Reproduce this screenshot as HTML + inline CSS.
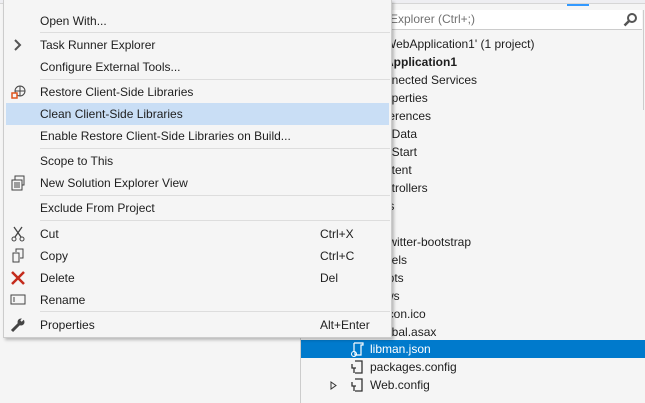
<!DOCTYPE html>
<html><head><style>
*{margin:0;padding:0;box-sizing:border-box}
body{width:645px;height:403px;overflow:hidden;background:#f5f5f5;font-family:"Liberation Sans",sans-serif;font-size:12px;color:#1e1e1e;position:relative}
.abs{position:absolute}
.top{left:0;top:0;width:645px;height:4px;background:#eeeef2;border-bottom:1px solid #d6d6d6}
.search{left:300px;top:10px;width:342px;height:20px;background:#fff;border-bottom:1px solid #ccc}
.tree div{position:absolute;left:0;height:18px;line-height:18px;white-space:nowrap}
.menu{left:3px;top:0;width:389px;height:338px;background:#f5f5f5;border:1px solid #ccc;border-top:none;box-shadow:2px 2px 3px rgba(0,0,0,.25)}
.it{position:absolute;left:0;width:385px;height:22px;line-height:22px}
.it .t{position:absolute;left:36px}
.it .k{position:absolute;left:316px}
.sep{position:absolute;left:36px;width:350px;height:1px;background:#ddd}
.ic{position:absolute;left:6px;top:3px;width:16px;height:16px}
</style></head><body>
<div class="abs top"></div>
<div class="abs" style="left:567px;top:4px;width:22px;height:2px;background:#3399ff"></div>
<div class="abs search"><span class="abs" style="left:90px;top:2px;color:#717171">Explorer (Ctrl+;)</span>
<svg class="abs" style="left:323px;top:3px" width="14" height="14"><circle cx="9" cy="5" r="4" fill="none" stroke="#555" stroke-width="2"/><line x1="6" y1="8" x2="1.5" y2="12.5" stroke="#555" stroke-width="2.5"/></svg></div>
<div class="abs" style="left:643px;top:10px;width:1px;height:100px;background:#ccc"></div>
<div class="abs" style="left:300px;top:338px;width:1px;height:65px;background:#ccc"></div>
<div class="abs tree" style="left:300px;top:0;width:345px;height:403px">
<div style="top:35px;left:85px">WebApplication1' (1 project)</div>
<div style="top:53px;left:85px;font-weight:bold">Application1</div>
<div style="top:71px;left:85px">nnected Services</div>
<div style="top:89px;left:85px">operties</div>
<div style="top:107px;left:85px">ferences</div>
<div style="top:125px;left:85px">_Data</div>
<div style="top:143px;left:85px">_Start</div>
<div style="top:161px;left:85px">ntent</div>
<div style="top:179px;left:85px">ntrollers</div>
<div style="top:197px;left:85px">ts</div>
<div style="top:233px;left:85px">twitter-bootstrap</div>
<div style="top:251px;left:85px">dels</div>
<div style="top:269px;left:85px">ipts</div>
<div style="top:287px;left:85px">ws</div>
<div style="top:305px;left:85px">icon.ico</div>
<div style="top:323px;left:85px">obal.asax</div>
<div style="top:340px;left:1px;width:344px;background:#007acc;color:#fff"><svg class="abs" style="left:48px;top:1px" width="16" height="16"><path d="M5 2h9v2h-2v10H6v-3M5 2v9" fill="none" stroke="#fff" stroke-width="1.2"/><circle cx="5" cy="13" r="2.5" fill="none" stroke="#fff"/></svg><span class="abs" style="left:69px">libman.json</span></div>
<div style="top:358px;left:49px"><svg class="abs" style="left:0;top:1px" width="16" height="16"><path d="M6 2h7v12H6M3 5v4h4M5 9v5" fill="none" stroke="#333" stroke-width="1.3"/></svg><span class="abs" style="left:21px">packages.config</span></div>
<div style="top:376px;left:30px"><svg class="abs" style="left:0;top:5px" width="8" height="9"><path d="M1 1l5 3.5L1 8z" fill="none" stroke="#333"/></svg><svg class="abs" style="left:19px;top:1px" width="16" height="16"><path d="M6 2h7v12H6M3 5v4h4M5 9v5" fill="none" stroke="#333" stroke-width="1.3"/></svg><span class="abs" style="left:40px">Web.config</span></div>
</div>
<div class="abs menu">
<div class="it" style="top:10px"><span class="t">Open With...</span></div>
<div class="sep" style="top:32px"></div>
<div class="it" style="top:34px"><svg class="ic" viewBox="0 0 16 16"><path d="M5 3l5 5-5 5" fill="none" stroke="#555" stroke-width="2"/></svg><span class="t">Task Runner Explorer</span></div>
<div class="it" style="top:56px"><span class="t">Configure External Tools...</span></div>
<div class="sep" style="top:79px"></div>
<div class="it" style="top:81px"><svg class="ic" viewBox="0 0 16 16"><circle cx="10" cy="7" r="5" fill="none" stroke="#444"/><path d="M5 7h10M10 2v10" stroke="#444"/><rect x="2" y="9" width="5" height="5" fill="#f5f5f5" stroke="#e0541c" stroke-width="1.5"/></svg><span class="t">Restore Client-Side Libraries</span></div>
<div class="it" style="top:103px;left:2px;width:383px;background:#c9def5"><span class="t" style="left:34px">Clean Client-Side Libraries</span></div>
<div class="it" style="top:125px"><span class="t">Enable Restore Client-Side Libraries on Build...</span></div>
<div class="sep" style="top:148px"></div>
<div class="it" style="top:150px"><span class="t">Scope to This</span></div>
<div class="it" style="top:172px"><svg class="ic" viewBox="0 0 16 16"><rect x="5" y="1" width="9" height="9" fill="none" stroke="#444"/><rect x="2" y="5" width="10" height="10" fill="#f5f5f5" stroke="#444"/><path d="M4 8h6M4 10h6M4 12h6" stroke="#444"/></svg><span class="t">New Solution Explorer View</span></div>
<div class="sep" style="top:195px"></div>
<div class="it" style="top:197px"><span class="t">Exclude From Project</span></div>
<div class="sep" style="top:220px"></div>
<div class="it" style="top:223px"><svg class="ic" viewBox="0 0 16 16"><path d="M4 1l7 10M12 1L5 11" stroke="#444" stroke-width="1.3"/><circle cx="4" cy="13" r="2" fill="none" stroke="#444"/><circle cx="12" cy="13" r="2" fill="none" stroke="#444"/></svg><span class="t">Cut</span><span class="k">Ctrl+X</span></div>
<div class="it" style="top:245px"><svg class="ic" viewBox="0 0 16 16"><path d="M6 4V1h7v9h-3" fill="none" stroke="#444"/><rect x="3" y="5" width="6" height="9" fill="none" stroke="#444"/></svg><span class="t">Copy</span><span class="k">Ctrl+C</span></div>
<div class="it" style="top:267px"><svg class="ic" viewBox="0 0 16 16"><path d="M2 2l12 12M14 2L2 14" stroke="#c42b1c" stroke-width="2.5"/></svg><span class="t">Delete</span><span class="k">Del</span></div>
<div class="it" style="top:289px"><svg class="ic" viewBox="0 0 16 16"><rect x="1" y="3" width="14" height="9" fill="none" stroke="#444"/><path d="M4 5v5" stroke="#444"/></svg><span class="t">Rename</span></div>
<div class="sep" style="top:311px"></div>
<div class="it" style="top:314px"><svg class="ic" viewBox="0 0 16 16"><path d="M2 14l7-7" stroke="#444" stroke-width="3"/><circle cx="11" cy="5" r="3.5" fill="#444"/><path d="M11 4l3-3" stroke="#f5f5f5" stroke-width="2"/></svg><span class="t">Properties</span><span class="k">Alt+Enter</span></div>
</div>
</body></html>
